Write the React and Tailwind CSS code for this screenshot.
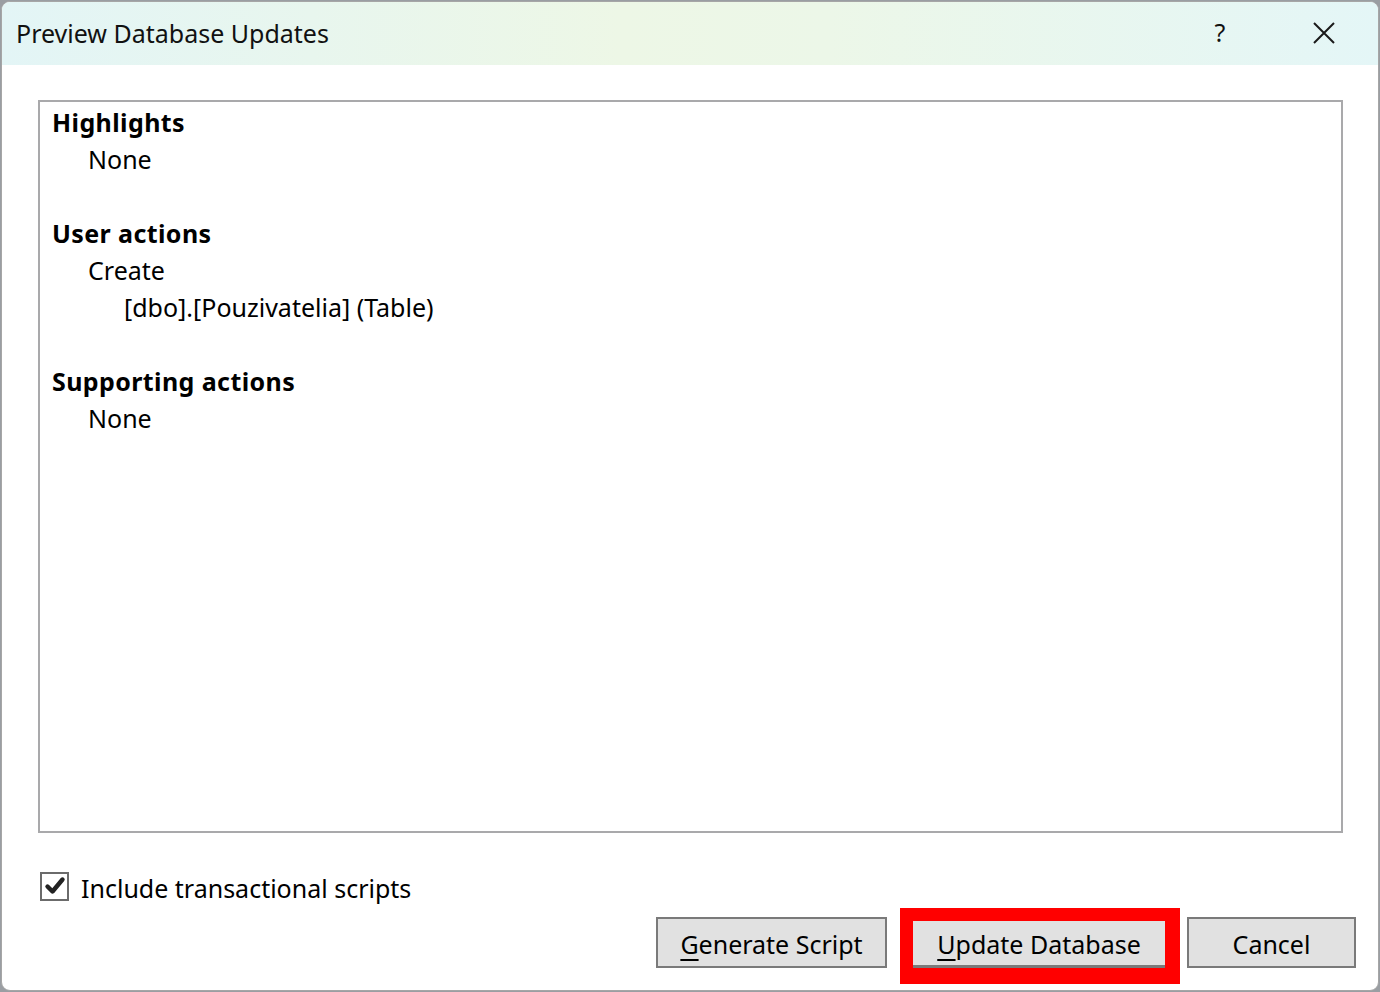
import React from "react";

const font = { fontFamily: '"Noto Sans", "Open Sans", sans-serif' };

function Btn({ children, className = "" }) {
  return (
    <div
      className={
        "h-[51px] flex items-center justify-center pt-[4px] bg-[#e1e1e1] border-2 border-[#7a7a7a] text-[25px] text-black " +
        className
      }
    >
      {children}
    </div>
  );
}

export default function App() {
  return (
    <div className="w-[1380px] h-[992px] bg-[#9a9ea3] overflow-hidden" style={font}>
      <div className="ml-[1px] mt-[1px] w-[1378px] h-[990px] rounded-[9px] border border-[#a6a6a6] bg-white overflow-hidden flex flex-col">
        {/* title bar */}
        <div className="h-[63px] shrink-0 flex items-center bg-[linear-gradient(90deg,#e3f5f6_0%,#edf7e6_45%,#ecf7e8_60%,#e4f6f7_100%)]">
          <div className="pl-[14px] text-[25px] text-[#111] leading-none">
            Preview Database Updates
          </div>
          <div className="flex-1" />
          <div className="w-[40px] text-center text-[25px] text-[#111] leading-none mr-[73px] pb-[2px]">?</div>
          <svg width="22" height="22" viewBox="0 0 22 22" className="mr-[43px] mb-[1px]">
            <path d="M1 1 L21 21 M21 1 L1 21" stroke="#1a1a1a" strokeWidth="2" fill="none" />
          </svg>
        </div>

        {/* body */}
        <div className="flex-1 flex flex-col pl-[36px] pr-[35px] pt-[35px]">
          <div className="h-[733px] border-2 border-[#a9a9ab] pl-[12px] pt-[2px] text-[25px] text-black leading-[37px]">
            <div className="font-bold tracking-[0.4px]">Highlights</div>
            <div className="pl-[36px]">None</div>
            <div className="h-[37px]" />
            <div className="font-bold tracking-[0.4px]">User actions</div>
            <div className="pl-[36px]">Create</div>
            <div className="pl-[72px]">[dbo].[Pouzivatelia] (Table)</div>
            <div className="h-[37px]" />
            <div className="font-bold tracking-[0.4px]">Supporting actions</div>
            <div className="pl-[36px]">None</div>
          </div>

          <div className="mt-[38px] flex items-center gap-[12px] pl-[2px]">
            <div className="w-[29px] h-[29px] border-2 border-[#6b6b6b] bg-white flex items-center justify-center">
              <svg width="22" height="20" viewBox="0 0 22 20">
                <path d="M3.5 10.5 L8.5 15.5 L18.5 3.5" stroke="#222" strokeWidth="4.4" fill="none" strokeLinecap="round" strokeLinejoin="round" />
              </svg>
            </div>
            <div className="text-[25px] text-black leading-none pt-[5px]">Include transactional scripts</div>
          </div>

          <div className="mt-[7px] flex items-start justify-end mr-[-13px]">
            <Btn className="w-[231px] mt-[9px]">
              <span><span className="underline underline-offset-[5px] decoration-2">G</span>enerate Script</span>
            </Btn>
            <div className="ml-[13px] w-[280px] h-[76px] bg-[#ff0000] pl-[13px] pt-[13px]">
              <div className="w-[252px] h-[47px] pt-[4px] bg-[#e1e1e1] border-b-[3px] border-[#7a7a7a] flex items-center justify-center text-[25px] text-black">
                <span><span className="underline underline-offset-[5px] decoration-2">U</span>pdate Database</span>
              </div>
            </div>
            <Btn className="w-[169px] mt-[9px] ml-[7px]">Cancel</Btn>
          </div>
        </div>
      </div>
    </div>
  );
}
